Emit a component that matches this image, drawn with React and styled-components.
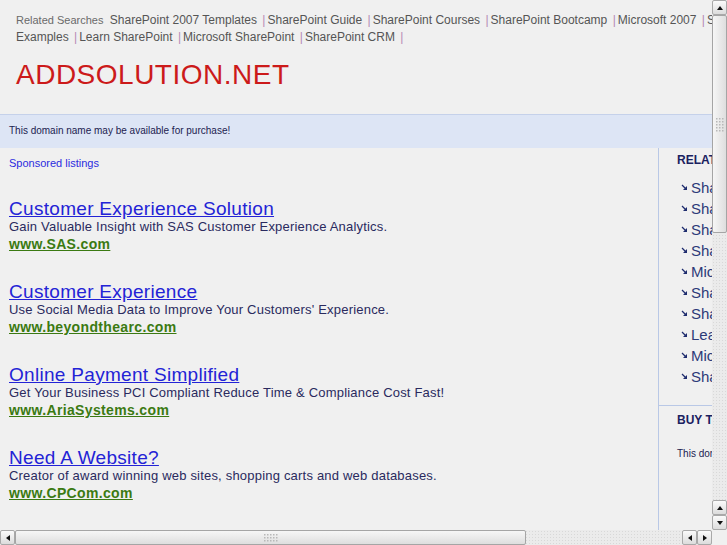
import React from "react";
import styled, { createGlobalStyle } from "styled-components";

const searches = [
  "SharePoint 2007 Templates",
  "SharePoint Guide",
  "SharePoint Courses",
  "SharePoint Bootcamp",
  "Microsoft 2007",
  "SharePoint Training",
  "SharePoint Examples",
  "Learn SharePoint",
  "Microsoft SharePoint",
  "SharePoint CRM",
];

const ads = [
  {
    title: "Customer Experience Solution",
    text: "Gain Valuable Insight with SAS Customer Experience Analytics.",
    url: "www.SAS.com",
  },
  {
    title: "Customer Experience",
    text: "Use Social Media Data to Improve Your Customers' Experience.",
    url: "www.beyondthearc.com",
  },
  {
    title: "Online Payment Simplified",
    text: "Get Your Business PCI Compliant Reduce Time & Compliance Cost Fast!",
    url: "www.AriaSystems.com",
  },
  {
    title: "Need A Website?",
    text: "Creator of award winning web sites, shopping carts and web databases.",
    url: "www.CPCom.com",
  },
];

const Arrow = ({ dir }) => {
  const pts = {
    up: "1,6 4,2 7,6",
    down: "1,2 4,6 7,2",
    left: "6,1 2,4 6,7",
    right: "2,1 6,4 2,7",
  }[dir];
  return (
    <svg width="8" height="8" viewBox="0 0 8 8">
      <polygon points={pts} fill="#111" />
    </svg>
  );
};

const Bullet = () => (
  <svg width="7" height="7" viewBox="0 0 7 7">
    <path d="M1 1 L5 5" stroke="#1e2c6e" strokeWidth="1.3" />
    <polygon points="6,2 6,6 2,6" fill="#1e2c6e" />
  </svg>
);

const Grip = ({ vertical }) => (
  <svg width={vertical ? 9 : 15} height={vertical ? 15 : 9}>
    {Array.from({ length: 15 }).map((_, i) => {
      const a = i % 3;
      const b = Math.floor(i / 3);
      return (
        <rect
          key={i}
          x={vertical ? a * 3 + 1 : b * 3 + 1}
          y={vertical ? b * 3 + 1 : a * 3 + 1}
          width="1.5"
          height="1.5"
          fill="#b8b8b8"
        />
      );
    })}
  </svg>
);

export default function App() {
  return (
    <>
      <GlobalStyle />
      <Frame>
        <Viewport>
          <Page>
            <Header>
              <Searches>
                <Label>Related Searches</Label>{" "}
                {searches.map((s) => (
                  <React.Fragment key={s}>
                    <SearchLink>{s}</SearchLink> <Sep>|</Sep>
                  </React.Fragment>
                ))}
              </Searches>
              <Title>ADDSOLUTION.NET</Title>
            </Header>
            <Banner>This domain name may be available for purchase!</Banner>
            <Body>
              <Main>
                <Sponsored>Sponsored listings</Sponsored>
                <AdList>
                  {ads.map((ad) => (
                    <Ad key={ad.url}>
                      <AdTitle>{ad.title}</AdTitle>
                      <AdText>{ad.text}</AdText>
                      <AdUrl>{ad.url}</AdUrl>
                    </Ad>
                  ))}
                </AdList>
              </Main>
              <Side>
                <SideBlock>
                  <SideHeading>RELATED SEARCHES</SideHeading>
                  <SideList>
                    {searches.map((s) => (
                      <SideItem key={s}>
                        <Bullet />
                        <span>{s}</span>
                      </SideItem>
                    ))}
                  </SideList>
                </SideBlock>
                <SideBlock $divided>
                  <SideHeading>BUY THIS DOMAIN</SideHeading>
                  <SideNote>This domain may be for sale!</SideNote>
                </SideBlock>
              </Side>
            </Body>
          </Page>
        </Viewport>
        <VBar>
          <Btn><Arrow dir="up" /></Btn>
          <Thumb $vertical $size={218}><Grip vertical /></Thumb>
          <Track />
          <Btn><Arrow dir="up" /></Btn>
          <Btn><Arrow dir="down" /></Btn>
        </VBar>
        <HBar>
          <Btn><Arrow dir="left" /></Btn>
          <Thumb $size={511}><Grip /></Thumb>
          <Track />
          <Btn><Arrow dir="left" /></Btn>
          <Btn><Arrow dir="right" /></Btn>
        </HBar>
        <Corner />
      </Frame>
    </>
  );
}

const GlobalStyle = createGlobalStyle`
  html, body {
    margin: 0;
    padding: 0;
    background: #f0f0f0;
    overflow: hidden;
  }
`;

const Frame = styled.div`
  display: grid;
  grid-template-columns: 712px 15px;
  grid-template-rows: 530px 15px;
  width: 727px;
  height: 545px;
  font-family: "Liberation Sans", Arial, sans-serif;
`;

const Viewport = styled.div`
  overflow: hidden;
  background: #f0f0f0;
`;

const Page = styled.div`
  width: 929px;
`;

const Header = styled.div`
  padding: 12px 14px 0 16px;
  height: 114px;
  box-sizing: border-box;
`;

const Searches = styled.div`
  font-size: 12px;
  line-height: 17px;
  color: #555;
`;

const Label = styled.span`
  font-size: 11px;
  color: #6a6a6a;
  margin-right: 3px;
`;

const SearchLink = styled.span`
  color: #555;
`;

const Sep = styled.span`
  color: #b58ab5;
  margin: 0 2px 0 2px;
`;

const Title = styled.div`
  margin-top: 13px;
  font-size: 28px;
  line-height: 32px;
  letter-spacing: 0.5px;
  color: #cc1a1a;
`;

const Banner = styled.div`
  height: 34px;
  box-sizing: border-box;
  border-top: 1px solid #c5d1ea;
  background: #dde5f5;
  padding: 9px 9px 0;
  font-size: 10px;
  line-height: 14px;
  color: #1c2250;
`;

const Body = styled.div`
  display: grid;
  grid-template-columns: 658px 1fr;
  min-height: 400px;
`;

const Main = styled.div`
  padding: 8px 9px 0;
`;

const Sponsored = styled.div`
  font-size: 11px;
  line-height: 14px;
  color: #2b2bdf;
`;

const AdList = styled.div`
  display: flex;
  flex-direction: column;
  gap: 28px;
  margin-top: 28px;
`;

const Ad = styled.div`
  display: flex;
  flex-direction: column;
  align-items: flex-start;
`;

const AdTitle = styled.a`
  font-size: 19px;
  line-height: 21px;
  letter-spacing: 0.3px;
  color: #2323d6;
  text-decoration: underline;
`;

const AdText = styled.div`
  font-size: 13px;
  line-height: 16px;
  letter-spacing: 0.2px;
  color: #2a2a5e;
`;

const AdUrl = styled.a`
  font-size: 14px;
  line-height: 18px;
  font-weight: bold;
  letter-spacing: 0.35px;
  color: #3b7a12;
  text-decoration: underline;
`;

const Side = styled.div`
  border-left: 1px solid #b9c8e6;
  white-space: nowrap;
`;

const SideBlock = styled.div`
  padding: ${(p) => (p.$divided ? "7px" : "5px")} 0 0 18px;
  border-top: ${(p) => (p.$divided ? "1px solid #b9c8e6" : "none")};
  padding-bottom: ${(p) => (p.$divided ? "0" : "18px")};
`;

const SideHeading = styled.div`
  font-size: 12px;
  line-height: 14px;
  font-weight: bold;
  color: #1a2160;
`;

const SideList = styled.div`
  margin-top: 10px;
  padding-left: 4px;
`;

const SideItem = styled.div`
  display: flex;
  align-items: center;
  gap: 3px;
  font-size: 15px;
  line-height: 21px;
  color: #2c3a78;
`;

const SideNote = styled.div`
  margin-top: 21px;
  font-size: 10px;
  line-height: 12px;
  color: #1c2250;
`;

const Bar = styled.div`
  display: flex;
  background-color: #ebebeb;
  background-image: radial-gradient(#d8d8d8 0.6px, transparent 0.8px);
  background-size: 3px 3px;
`;

const VBar = styled(Bar)`
  flex-direction: column;
`;

const HBar = styled(Bar)`
  flex-direction: row;
`;

const Btn = styled.div`
  flex: 0 0 15px;
  width: 15px;
  height: 15px;
  box-sizing: border-box;
  border: 1px solid #a9a9a9;
  border-radius: 2px;
  background: linear-gradient(#fbfbfb, #dcdcdc);
  display: flex;
  align-items: center;
  justify-content: center;
`;

const Thumb = styled.div`
  flex: 0 0 ${(p) => p.$size}px;
  box-sizing: border-box;
  border: 1px solid #a5a5a5;
  border-radius: 2px;
  background: ${(p) =>
    p.$vertical
      ? "linear-gradient(90deg, #f6f6f6, #dedede)"
      : "linear-gradient(#f6f6f6, #dedede)"};
  display: flex;
  align-items: center;
  justify-content: center;
`;

const Track = styled.div`
  flex: 1;
`;

const Corner = styled.div`
  background: #f0f0f0;
`;
